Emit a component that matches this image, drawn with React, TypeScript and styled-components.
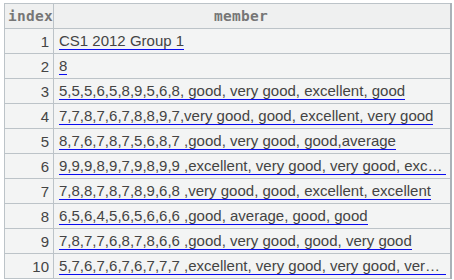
import styled, { createGlobalStyle } from "styled-components";

const GlobalStyle = createGlobalStyle`
  body {
    margin: 0;
    background: #ffffff;
    font-family: "Liberation Sans", Arial, sans-serif;
  }
`;

const rows = [
  "CS1 2012 Group 1",
  "8",
  "5,5,5,6,5,8,9,5,6,8, good, very good, excellent, good",
  "7,7,8,7,6,7,8,8,9,7,very good, good, excellent, very good",
  "8,7,6,7,8,7,5,6,8,7 ,good, very good, good,average",
  "9,9,9,8,9,7,9,8,9,9 ,excellent, very good, very good, excellent, good",
  "7,8,8,7,8,7,8,9,6,8 ,very good, good, excellent, excellent",
  "6,5,6,4,5,6,5,6,6,6 ,good, average, good, good",
  "7,8,7,7,6,8,7,8,6,6 ,good, very good, good, very good",
  "5,7,6,7,6,7,6,7,7,7 ,excellent, very good, very good, very good, good",
];

export default function App() {
  return (
    <>
      <GlobalStyle />
      <Frame>
        <Grid>
          <colgroup>
            <col style={{ width: 49 }} />
            <col />
          </colgroup>
          <thead>
            <tr>
              <HeadCell>index</HeadCell>
              <HeadCell $wide>member</HeadCell>
            </tr>
          </thead>
          <tbody>
            {rows.map((member, i) => (
              <tr key={i}>
                <IndexCell>{i + 1}</IndexCell>
                <MemberCell>
                  <MemberLink>{member}</MemberLink>
                </MemberCell>
              </tr>
            ))}
          </tbody>
        </Grid>
      </Frame>
    </>
  );
}

const Frame = styled.div`
  padding: 3px 0 0 4px;
  width: 448px;
`;

const Grid = styled.table`
  width: 448px;
  table-layout: fixed;
  border-collapse: collapse;
  border-right: 2px solid #aab2b8;
`;

const HeadCell = styled.th<{ $wide?: boolean }>`
  height: 24px;
  padding: 0 ${({ $wide }) => ($wide ? "22px" : "0")} 0 ${({ $wide }) => ($wide ? "0" : "3px")};
  background: #eff0f0;
  border: 1px solid #bcc3c8;
  font-family: "DejaVu Sans Mono", monospace;
  font-size: 14.5px;
  font-weight: bold;
  color: #767676;
  text-align: center;
  letter-spacing: 0.3px;
`;

const IndexCell = styled.td`
  height: 24px;
  padding: 0 4px 0 0;
  background: #f3f4f4;
  border: 1px solid #bcc3c8;
  text-align: right;
  font-size: 15px;
  color: #444444;
`;

const MemberCell = styled.td`
  height: 24px;
  padding: 0 4px 0 5px;
  background: #f3f4f4;
  border: 1px solid #bcc3c8;
  font-size: 15px;
  color: #444444;
  overflow: hidden;
`;

const MemberLink = styled.span`
  display: inline-block;
  vertical-align: middle;
  max-width: 100%;
  white-space: nowrap;
  overflow: hidden;
  text-overflow: ellipsis;
  line-height: 16px;
  padding-bottom: 0;
  border-bottom: 1px solid #0a0af0;
`;
